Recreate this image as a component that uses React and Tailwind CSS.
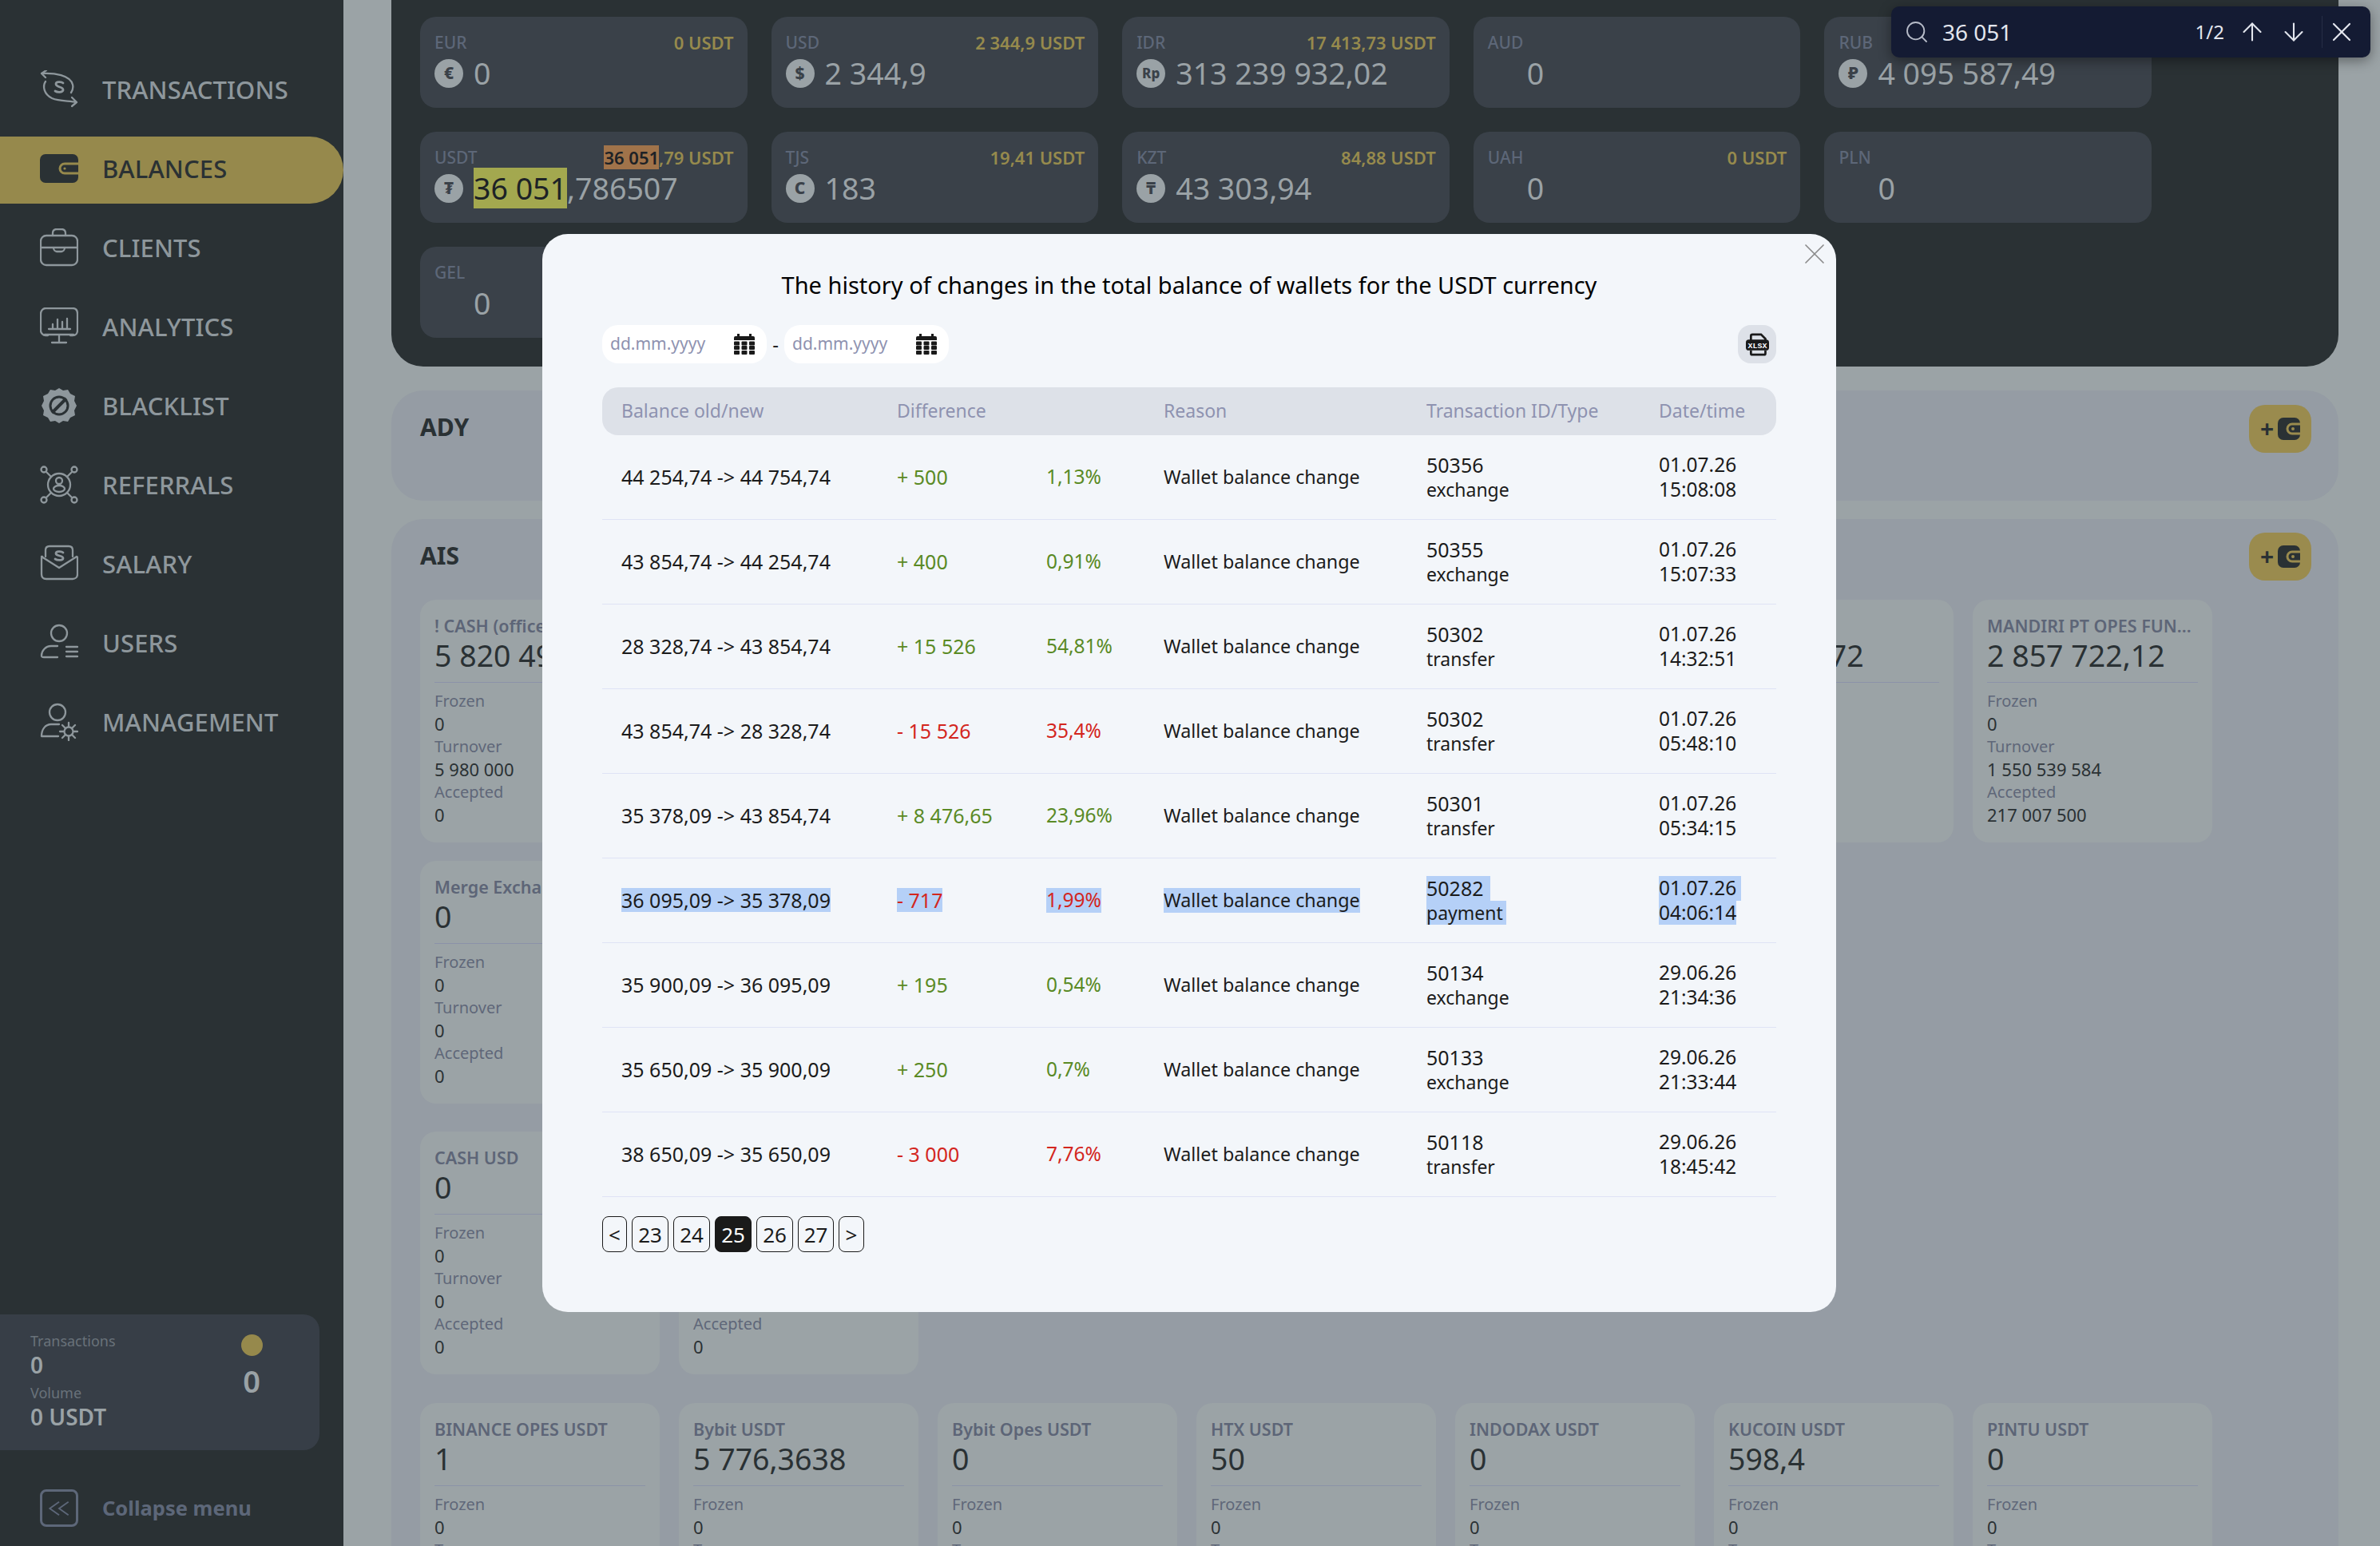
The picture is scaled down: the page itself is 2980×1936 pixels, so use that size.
import { ArrowDown, ArrowUp, Search, X } from "lucide-react";

const font = { fontFamily: '"Noto Sans", sans-serif' };

function Wallet({ dark = "#2a3134", tab = "#96894c", className = "" }) {
  return (
    <svg viewBox="0 0 48 36" className={className}>
      <rect x="0" y="0" width="48" height="36" rx="7" fill={dark} />
      <path d="M48 12H31a6 6 0 0 0 0 12h17" fill="none" stroke={tab} strokeWidth="3" />
      <circle cx="31" cy="18" r="1.6" fill={tab} />
    </svg>
  );
}

const NAV_ICONS = {
  transactions: (
    <>
      <path d="M2 4C18 3 38 6 41 18c1 4 0 7-2 10M8 0L2 4l5 5" />
      <path d="M7 14C3 20 5 30 15 35c9 4 21 3 31 5M40 34l6 6-6 5" />
      <path d="M29 16c-2-2-9-2-9 1 0 5 10 3 9 8-1 3-7 3-10 1" strokeWidth="2.8" />
    </>
  ),
  clients: (
    <>
      <rect x="1" y="9" width="46" height="37" rx="7" />
      <path d="M16 9V6c0-3 2-5 5-5h6c3 0 5 2 5 5v3M1 24h46M17 24c0 3 2 5 4 5h6c2 0 4-2 4-5" />
    </>
  ),
  analytics: (
    <>
      <path d="M10 35H7c-3 0-6-3-6-6V8c0-4 3-7 6-7h34c4 0 6 3 6 7v21c0 3-2 6-6 6h-3" />
      <path d="M11 27h27M16 27v-6M22 27V15M28 27v-9M34 27V14M24 34v9M15 44h18M6 34h36" />
    </>
  ),
  referrals: (
    <>
      <circle cx="24" cy="24" r="14" />
      <circle cx="24" cy="19" r="4" />
      <ellipse cx="24" cy="29" rx="7" ry="4" />
      <circle cx="5" cy="5" r="3.5" />
      <circle cx="43" cy="5" r="3.5" />
      <circle cx="5" cy="43" r="3.5" />
      <circle cx="43" cy="43" r="3.5" />
      <path d="M8 8l6 6M40 8l-6 6M8 40l6-6M40 40l-6-6" />
    </>
  ),
  salary: (
    <>
      <path d="M7 15V7c0-3 2-5 5-5h24c3 0 5 2 5 5v8" />
      <path d="M2 15l22 14 22-14c1 0 1 1 1 2v20c0 4-3 6-6 6H8c-4 0-6-2-6-6V17c0-1 0-2 1-2z" />
      <path d="M29 10c-2-2-9-2-9 1 0 4 9 2 9 6 0 3-7 3-10 1" strokeWidth="2.8" />
    </>
  ),
  users: (
    <>
      <circle cx="24" cy="12" r="10" />
      <path d="M22 28h-8c-7 0-12 6-12 12 0 2 1 2 3 2h17M33 29h14M33 35h14M33 41h14" />
    </>
  ),
  management: (
    <>
      <circle cx="22" cy="12" r="10" />
      <path d="M24 27H14C7 27 2 33 2 42h21" />
      <circle cx="36" cy="36" r="5.5" />
      <path d="M36 25v5M36 42v5M25 36h5M42 36h5M28 28l4 4M40 40l4 4M28 44l4-4M40 32l4-4" />
    </>
  ),
};

function NavIcon({ name }) {
  if (name === "balances") return <Wallet dark="#2a3134" tab="#96894c" className="w-[48px] h-[36px]" />;
  if (name === "blacklist") {
    return (
      <svg viewBox="0 0 48 48" className="w-[48px] h-[48px]">
        <path fill="#8e979c" d="M24 2l5 3 6-1 3 5 6 3-1 6 3 6-3 6 1 6-6 3-3 5-6-1-5 3-5-3-6 1-3-5-6-3 1-6-3-6 3-6-1-6 6-3 3-5 6 1z" />
        <circle cx="24" cy="24" r="11" fill="none" stroke="#2a3134" strokeWidth="3" />
        <path d="M15 33l18-18" stroke="#2a3134" strokeWidth="4" />
      </svg>
    );
  }
  return (
    <svg viewBox="0 0 48 48" fill="none" stroke="#8e979c" strokeWidth="2.3" strokeLinecap="round" strokeLinejoin="round" className="w-[48px] h-[48px]">
      {NAV_ICONS[name]}
    </svg>
  );
}

const NAV = [
  ["transactions", "TRANSACTIONS"],
  ["balances", "BALANCES"],
  ["clients", "CLIENTS"],
  ["analytics", "ANALYTICS"],
  ["blacklist", "BLACKLIST"],
  ["referrals", "REFERRALS"],
  ["salary", "SALARY"],
  ["users", "USERS"],
  ["management", "MANAGEMENT"],
];

function Sidebar() {
  return (
    <aside className="w-[430px] shrink-0 h-full bg-[#2a3134] flex flex-col justify-between pt-[72px] pb-[24px]">
      <nav className="flex flex-col gap-[15px]">
        {NAV.map(([key, label]) => (
          <div
            key={key}
            className={
              key === "balances"
                ? "h-[84px] pb-[4px] flex items-center gap-[30px] pl-[50px] bg-[#96894c] rounded-r-[42px] text-[#2a3134]"
                : "h-[84px] pb-[4px] flex items-center gap-[30px] pl-[50px] text-[#8e979c]"
            }
          >
            <span className="w-[48px] flex justify-center"><NavIcon name={key} /></span>
            <span className="text-[31px] font-medium tracking-[0.1px]">{label}</span>
          </div>
        ))}
      </nav>
      <div className="flex flex-col gap-[49px]">
        <div className="w-[400px] h-[170px] bg-[#373e47] rounded-r-[20px] flex justify-between pl-[38px] pr-[45px] pt-[21px]">
          <div>
            <div className="text-[18px] leading-[24px] text-[#69727a]">Transactions</div>
            <div className="text-[28px] leading-[32px] mt-[2px] font-semibold text-[#9aa2a6] mb-[7px]">0</div>
            <div className="text-[18px] leading-[24px] text-[#69727a]">Volume</div>
            <div className="text-[28px] leading-[32px] mt-[2px] font-semibold text-[#9aa2a6]">0 USDT</div>
          </div>
          <div className="w-[80px] flex flex-col items-center pt-[4px]">
            <div className="w-[27px] h-[27px] rounded-full bg-[#96894c]" />
            <div className="text-[38px] leading-[50px] mt-[6px] font-semibold text-[#9aa2a6]">0</div>
          </div>
        </div>
        <div className="flex items-center gap-[30px] pl-[50px]">
          <span className="w-[48px] h-[47px] border-[3px] border-[#5d6779] rounded-[8px] flex items-center justify-center">
            <svg viewBox="0 0 24 18" fill="none" stroke="#5d6779" strokeWidth="1.6" className="w-[28px] h-[22px]">
              <path d="M12 2L2 9l10 7M22 2L12 9l10 7" />
            </svg>
          </span>
          <span className="text-[25.5px] font-bold text-[#5d6779]">Collapse menu</span>
        </div>
      </div>
    </aside>
  );
}

const CURRENCIES = [
  { code: "EUR", usdt: "0 USDT", glyph: "€", value: "0" },
  { code: "USD", usdt: "2 344,9 USDT", glyph: "$", value: "2 344,9" },
  { code: "IDR", usdt: "17 413,73 USDT", glyph: "Rp", value: "313 239 932,02" },
  { code: "AUD", value: "0" },
  { code: "RUB", glyph: "₽", value: "4 095 587,49" },
  { code: "USDT", usdt: "79 USDT", mark: "36 051", glyph: "₮", value: ",786507", valueMark: "36 051" },
  { code: "TJS", usdt: "19,41 USDT", glyph: "C", value: "183" },
  { code: "KZT", usdt: "84,88 USDT", glyph: "₸", value: "43 303,94" },
  { code: "UAH", usdt: "0 USDT", value: "0" },
  { code: "PLN", value: "0" },
  { code: "GEL", value: "0" },
];

function CurrencyCard({ c }) {
  return (
    <div className="h-[114px] bg-[#3a4149] rounded-[20px] pl-[18px] pr-[17px] pt-[18px]">
      <div className="flex justify-between items-center h-[28px] text-[21px] leading-[28px]">
        <span className="text-[#5d6778] font-medium">{c.code}</span>
        <span className="text-[#968a4d] text-[22px] font-semibold">
          {c.mark && <span className="bg-[#a0734a] text-[#1d2226]">{c.mark}</span>}
          {c.mark && ","}
          {c.usdt}
        </span>
      </div>
      <div className="flex items-center gap-[13px] h-[48px] mt-[1px]">
        <span className={c.glyph ? "w-[36px] h-[36px] rounded-full bg-[#9aa2a6] text-[#3a4149] font-extrabold text-[21px] flex items-center justify-center" : "w-[36px] h-[36px]"}>
          <span className={c.glyph === "Rp" ? "text-[17px]" : ""}>{c.glyph}</span>
        </span>
        <span className="text-[37.5px] leading-[48px] text-[#9aa2a6] whitespace-nowrap">
          {c.valueMark && <span className="bg-[#a3a84f] text-[#1d2226]">{c.valueMark}</span>}
          {c.value}
        </span>
      </div>
    </div>
  );
}

function AddWallet() {
  return (
    <button className="w-[78px] h-[60px] rounded-[20px] bg-[#9a8b4e] flex items-center justify-center gap-[5px]">
      <span className="text-[30px] leading-none font-bold text-[#2a3134]">+</span>
      <svg viewBox="0 0 28 28" className="w-[28px] h-[28px]">
        <rect width="28" height="28" rx="7" fill="#2a3134" />
        <path d="M28 8H18a6 6 0 0 0 0 12h10" fill="none" stroke="#9a8b4e" strokeWidth="3" />
        <circle cx="19" cy="14" r="2" fill="#9a8b4e" />
      </svg>
    </button>
  );
}

// cards mostly covered by the modal: only the listed parts show, the rest stays blank
function Account({ a }) {
  const rows = [
    ["Frozen", a.frozen ?? "0"],
    ["Turnover", a.turnover ?? "0"],
    ["Accepted", a.accepted ?? "0"],
  ];
  return (
    <div className="w-[300px] h-[304px] shrink-0 bg-[#9ba3a6] rounded-[20px] px-[18px] pt-[19px] overflow-hidden">
      <div className="text-[21.5px] h-[28px] leading-[28px] font-semibold text-[#5d6577] whitespace-nowrap overflow-hidden">{a.name}</div>
      <div className="text-[37.5px] leading-[46px] text-[#2a3134] whitespace-nowrap h-[57px] border-b border-[#8b92a8]">{a.value}</div>
      <div className="pt-[9px]">
        {rows.map(([k, v]) => (
          <div key={k} className={a.blank?.includes(k) ? "invisible" : ""}>
            <div className="text-[20px] leading-[28px] text-[#5f6779]">{k}</div>
            <div className="text-[22px] leading-[29px] text-[#2a3134]">{v}</div>
          </div>
        ))}
      </div>
    </div>
  );
}

const ALL = ["Frozen", "Turnover", "Accepted"];
const ROW_A = [
  { name: "! CASH (office)", value: "5 820 490", turnover: "5 980 000" },
  { id: 2, blank: ALL },
  { id: 3, blank: ALL },
  { id: 4, blank: ALL },
  { id: 5, blank: ALL },
  { id: 6, value: "1 204 372", blank: ALL },
  { name: "MANDIRI PT OPES FUN...", value: "2 857 722,12", turnover: "1 550 539 584", accepted: "217 007 500" },
];
const ROW_B = [{ name: "Merge Exchange", value: "0" }];
const ROW_C = [{ name: "CASH USD", value: "0" }, { id: 2, blank: ["Frozen", "Turnover"] }];
const ROW_D = [
  { name: "BINANCE OPES USDT", value: "1" },
  { name: "Bybit USDT", value: "5 776,3638" },
  { name: "Bybit Opes USDT", value: "0" },
  { name: "HTX USDT", value: "50" },
  { name: "INDODAX USDT", value: "0" },
  { name: "KUCOIN USDT", value: "598,4" },
  { name: "PINTU USDT", value: "0" },
];

function AccountRow({ items, className = "" }) {
  return (
    <div className={"flex gap-[24px] " + className}>
      {items.map((a, i) => <Account key={i} a={a} />)}
    </div>
  );
}

function Main() {
  return (
    <main className="flex-1 h-full pl-[60px] pr-[52px] bg-[#9ba3a6] overflow-hidden">
      <section className="h-[459px] bg-[#2a3134] rounded-b-[40px] pt-[21px] pl-[36px]">
        <div className="grid grid-cols-5 gap-[30px] w-[2168px]">
          {CURRENCIES.map((c) => <CurrencyCard key={c.code} c={c} />)}
        </div>
      </section>
      <section className="mt-[30px] h-[138px] bg-[#959ca4] rounded-[40px] pl-[36px] pr-[34px] pt-[18px] flex justify-between items-start">
        <h2 className="text-[30px] leading-[56px] font-bold text-[#2a3134]">ADY</h2>
        <AddWallet />
      </section>
      <section className="mt-[23px] bg-[#959ca4] rounded-[40px] pl-[36px] pr-[34px] pt-[17px] h-[1400px]">
        <div className="flex justify-between items-start h-[84px]">
          <h2 className="text-[30px] leading-[58px] font-bold text-[#2a3134]">AIS</h2>
          <AddWallet />
        </div>
        <AccountRow items={ROW_A} className="mb-[23px]" />
        <AccountRow items={ROW_B} className="mb-[35px]" />
        <AccountRow items={ROW_C} className="mb-[36px]" />
        <AccountRow items={ROW_D} />
      </section>
    </main>
  );
}

const HISTORY = [
  ["44 254,74 -> 44 754,74", "+ 500", "1,13%", "50356", "exchange", "01.07.26", "15:08:08"],
  ["43 854,74 -> 44 254,74", "+ 400", "0,91%", "50355", "exchange", "01.07.26", "15:07:33"],
  ["28 328,74 -> 43 854,74", "+ 15 526", "54,81%", "50302", "transfer", "01.07.26", "14:32:51"],
  ["43 854,74 -> 28 328,74", "- 15 526", "35,4%", "50302", "transfer", "01.07.26", "05:48:10"],
  ["35 378,09 -> 43 854,74", "+ 8 476,65", "23,96%", "50301", "transfer", "01.07.26", "05:34:15"],
  ["36 095,09 -> 35 378,09", "- 717", "1,99%", "50282", "payment", "01.07.26", "04:06:14", true],
  ["35 900,09 -> 36 095,09", "+ 195", "0,54%", "50134", "exchange", "29.06.26", "21:34:36"],
  ["35 650,09 -> 35 900,09", "+ 250", "0,7%", "50133", "exchange", "29.06.26", "21:33:44"],
  ["38 650,09 -> 35 650,09", "- 3 000", "7,76%", "50118", "transfer", "29.06.26", "18:45:42"],
];

const GRID = "grid grid-cols-[345px_187px_147px_329px_291px_1fr] px-[24px] items-center";

function Sel({ on, children, className = "" }) {
  return <span className={(on ? "bg-[#b5d0f7] " : "") + "inline-block leading-[30.5px] " + className}>{children}</span>;
}

function HistoryRow({ r }) {
  const [change, diff, pct, id, type, date, time, selected] = r;
  const color = diff.startsWith("+") ? "text-[#5a8a25]" : "text-[#d3261e]";
  return (
    <div className={GRID + " h-[106px] border-b border-[#dfe3f5] text-[25px] text-[#1b1b1b]"}>
      <div><Sel on={selected}>{change}</Sel></div>
      <div className={color}><Sel on={selected}>{diff}</Sel></div>
      <div className={color + " text-[24.5px]"}><Sel on={selected}>{pct}</Sel></div>
      <div className="text-[23.3px]"><Sel on={selected}>Wallet balance change</Sel></div>
      <div className="flex flex-col items-start">
        <Sel on={selected} className={selected ? "pr-[8px]" : ""}>{id}</Sel>
        <Sel on={selected} className={"text-[23px] " + (selected ? "pr-[4px]" : "")}>{type}</Sel>
      </div>
      <div className="flex flex-col items-start text-[24.5px]">
        <Sel on={selected} className={selected ? "pr-[6px]" : ""}>{date}</Sel>
        <Sel on={selected}>{time}</Sel>
      </div>
    </div>
  );
}

function DateInput() {
  return (
    <div className="w-[206px] h-[48px] bg-white rounded-[20px] flex items-center justify-between pl-[10px] pr-[15px]">
      <input placeholder="dd.mm.yyyy" className="w-[140px] text-[21px] outline-none bg-transparent placeholder:text-[#8e92b0]" style={font} />
      <svg viewBox="0 0 26 27" className="w-[26px] h-[27px]" fill="#1a1a1a">
        <rect x="4" y="0" width="3" height="5" />
        <rect x="19" y="0" width="3" height="5" />
        <path d="M2 3h22a2 2 0 0 1 2 2v3H0V5a2 2 0 0 1 2-2z" />
        {[9.5, 15, 21].map((y) => [0, 9.5, 19].map((x) => <rect key={x + "-" + y} x={x} y={y} width="7" height="5" rx="1" />))}
      </svg>
    </div>
  );
}

const PAGES = [["<", "w-[31px]"], ["23", "w-[46px]"], ["24", "w-[46px]"], ["25", "w-[46px]"], ["26", "w-[46px]"], ["27", "w-[45px]"], [">", "w-[32px]"]];

function Modal() {
  return (
    <div className="absolute left-[679px] top-[293px] w-[1620px] h-[1350px] bg-[#f3f6fa] rounded-[32px] px-[75px] pt-[42px]">
      <button className="absolute right-[5px] top-[3px] text-[#8a8a8a]"><X size={44} strokeWidth={0.9} /></button>
      <h3 className="text-center text-[29px] leading-[44px] text-black">The history of changes in the total balance of wallets for the USDT currency</h3>
      <div className="mt-[28px] flex items-center justify-between">
        <div className="flex items-center">
          <DateInput />
          <span className="w-[22px] text-center text-[24px] text-[#1b1b1b]">-</span>
          <DateInput />
        </div>
        <button className="w-[48px] h-[48px] rounded-[16px] bg-[#dde1e8] flex items-center justify-center">
          <svg viewBox="0 0 34 32" className="w-[31px] h-[29px]">
            <path d="M8 10V4a2 2 0 0 1 2-2h12l6 6v2M8 24v4a2 2 0 0 0 2 2h16a2 2 0 0 0 2-2v-4" fill="none" stroke="#1a1a1a" strokeWidth="3" />
            <rect x="1" y="9" width="32" height="15" rx="4" fill="#1a1a1a" />
            <text x="17" y="21" textAnchor="middle" fontSize="11" fontWeight="700" fill="#fff" fontFamily="Liberation Mono, monospace">XLSX</text>
          </svg>
        </button>
      </div>
      <div className={GRID + " mt-[30px] h-[60px] pb-[2px] bg-[#dde1e8] rounded-[20px] text-[23px] text-[#8e92b0]"}>
        <div>Balance old/new</div>
        <div>Difference</div>
        <div />
        <div>Reason</div>
        <div>Transaction ID/Type</div>
        <div>Date/time</div>
      </div>
      {HISTORY.map((r, i) => <HistoryRow key={i} r={r} />)}
      <div className="mt-[24px] flex gap-[6px]">
        {PAGES.map(([p, w]) => (
          <button
            key={p}
            className={
              "h-[45px] rounded-[8px] border border-[#1a1a1a] text-[26px] leading-none " + w + " " +
              (p === "25" ? "bg-[#1a1a1a] text-white" : "text-[#1b1b1b]")
            }
          >
            {p}
          </button>
        ))}
      </div>
    </div>
  );
}

function FindBar() {
  return (
    <div className="absolute left-[2368px] top-[8px] w-[600px] h-[64px] rounded-[10px] bg-[#141b33] shadow-[0_4px_16px_rgba(0,0,0,0.4)] flex items-center pl-[16px] text-[#e3e6ee]">
      <Search size={32} strokeWidth={1.4} className="text-[#b6bbc8] shrink-0" />
      <span className="ml-[16px] text-[28px] w-[283px]">36 051</span>
      <span className="w-[70px] text-[24px] text-right">1/2</span>
      <span className="ml-[18px] w-[34px] flex justify-center"><ArrowUp size={36} strokeWidth={1.4} className="shrink-0" /></span>
      <span className="ml-[18px] w-[34px] flex justify-center"><ArrowDown size={36} strokeWidth={1.4} className="shrink-0" /></span>
      <span className="ml-[18px] w-[48px] flex justify-center border-l border-[#262d45]"><X size={40} strokeWidth={1.3} className="shrink-0" /></span>
    </div>
  );
}

export default function App() {
  return (
    <div className="relative flex w-[2980px] h-[1936px] overflow-hidden" style={font}>
      <Sidebar />
      <Main />
      <Modal />
      <FindBar />
    </div>
  );
}
